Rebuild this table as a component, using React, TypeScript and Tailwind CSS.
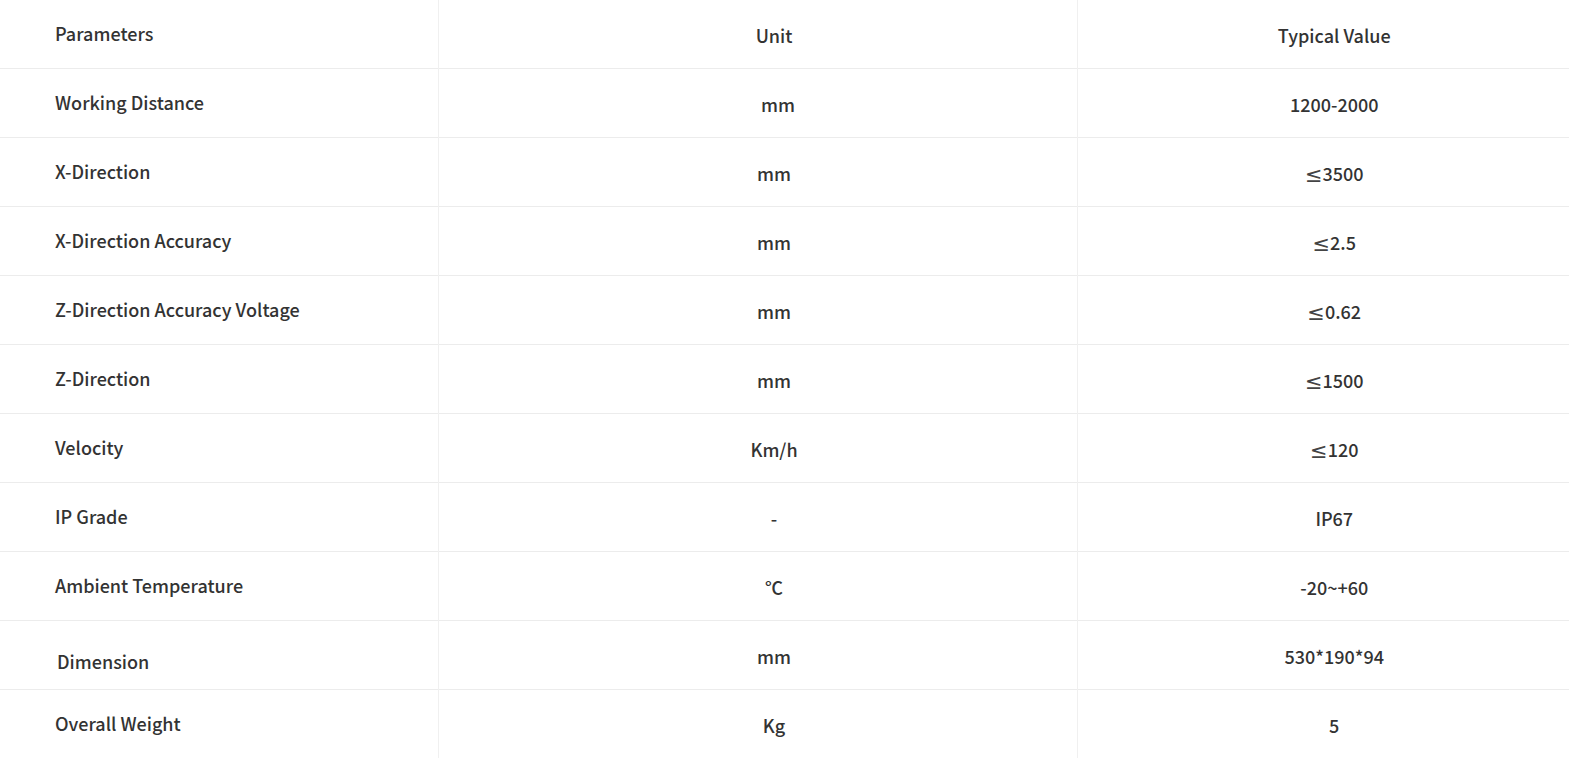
import React from "react";

const rows = [
  { name: "Working Distance", unit: "mm", value: "1200-2000", unitPad: true },
  { name: "X-Direction", unit: "mm", value: "3500", le: true },
  { name: "X-Direction Accuracy", unit: "mm", value: "2.5", le: true },
  { name: "Z-Direction Accuracy Voltage", unit: "mm", value: "0.62", le: true },
  { name: "Z-Direction", unit: "mm", value: "1500", le: true },
  { name: "Velocity", unit: "Km/h", value: "120", le: true },
  { name: "IP Grade", unit: "-", value: "IP67" },
  { name: "Ambient Temperature", unit: "℃", value: "-20~+60" },
  { name: "Dimension", unit: "mm", value: "530*190*94", shift: true },
  { name: "Overall Weight", unit: "Kg", value: "5" },
];

export default function App() {
  return (
    <div className="w-[1569px] bg-white text-[#333] font-['Noto_Sans_CJK_SC','Noto_Sans',sans-serif] text-[18px] font-medium leading-[27px]">
      <table className="w-full table-fixed border-collapse">
        <colgroup>
          <col className="w-[438px]" />
          <col className="w-[639px]" />
          <col />
        </colgroup>
        <thead>
          <tr className="h-[68px] border-b border-[#ececec]">
            <th className="pl-[55px] text-left font-medium border-r border-[#f0f0f0]">Parameters</th>
            <th className="pl-[33px] pt-[3px] text-center font-medium border-r border-[#f0f0f0]">Unit</th>
            <th className="pl-[22px] pt-[3px] text-center font-medium">Typical Value</th>
          </tr>
        </thead>
        <tbody>
          {rows.map((row) => (
            <tr key={row.name} className="h-[69px] border-b border-[#ececec] last:border-b-0">
              <td className={`text-left border-r border-[#f0f0f0] ${row.shift ? "pt-[13px] pl-[57px]" : "pl-[55px]"}`}>
                {row.name}
              </td>
              <td
                className={`text-center border-r border-[#f0f0f0] ${row.unitPad ? "pl-[41px]" : "pl-[33px]"} ${
                  row.shift ? "pt-[4px]" : "pt-[3px]"
                }`}
              >
                {row.unit}
              </td>
              <td className={`pl-[22px] text-center ${row.shift ? "pt-[4px]" : "pt-[3px]"}`}>
                {row.le && (
                  <span className="inline-block leading-none font-['DejaVu_Sans'] font-normal text-[21px] text-[#444] align-[-1px]">
                    ≤
                  </span>
                )}
                {row.value}
              </td>
            </tr>
          ))}
        </tbody>
      </table>
    </div>
  );
}
